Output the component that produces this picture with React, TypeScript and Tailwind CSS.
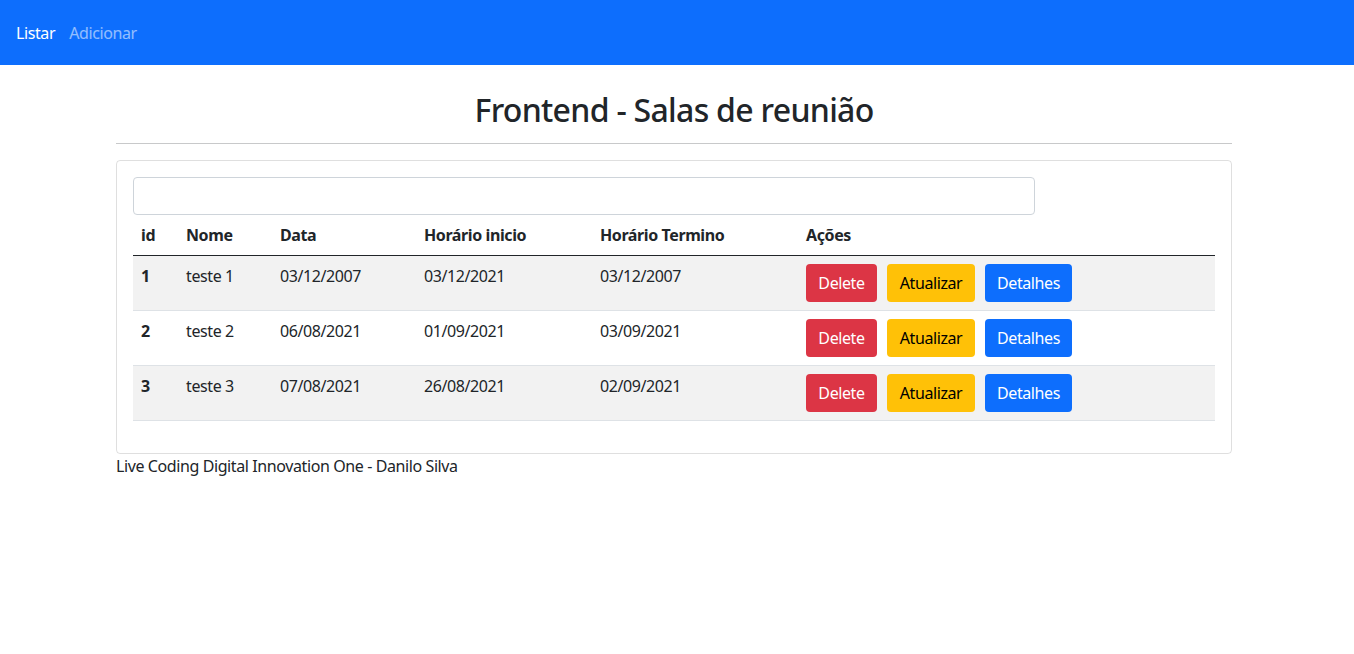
import React from "react";

const rows = [
  { id: 1, nome: "teste 1", data: "03/12/2007", inicio: "03/12/2021", termino: "03/12/2007" },
  { id: 2, nome: "teste 2", data: "06/08/2021", inicio: "01/09/2021", termino: "03/09/2021" },
  { id: 3, nome: "teste 3", data: "07/08/2021", inicio: "26/08/2021", termino: "02/09/2021" },
];

export default function App() {
  return (
    <div className="min-h-screen bg-white text-[#212529] text-[16px] leading-6 tracking-[-0.4px]" style={{ fontFamily: '"Noto Sans", sans-serif' }}>
      <nav className="bg-[#0d6efd] h-[65px] flex items-center px-4">
        <a className="text-white pr-[14px] cursor-pointer">Listar</a>
        <a className="text-white/55 cursor-pointer">Adicionar</a>
      </nav>
      <div className="w-[1122px] pr-[6px] mx-auto">
        <h2 className="text-[32px] font-medium leading-[38px] text-center pt-[26px] tracking-[-0.7px]">Frontend - Salas de reunião</h2>
        <hr className="mt-[14px] mb-4 border-0 border-t border-[#c8c9ca]" />
        <div className="border border-black/[0.125] rounded p-4">
          <input className="block w-[902px] h-[38px] border border-[#ced4da] rounded px-3 outline-none" />
          <table className="w-full border-collapse mb-4">
            <thead>
              <tr className="border-b border-[#212529] font-bold text-left">
                <th className="p-2 w-[45px]">id</th>
                <th className="p-2 w-[94px]">Nome</th>
                <th className="p-2 w-[144px]">Data</th>
                <th className="p-2 w-[176px]">Horário inicio</th>
                <th className="p-2 w-[206px]">Horário Termino</th>
                <th className="p-2">Ações</th>
              </tr>
            </thead>
            <tbody>
              {rows.map((r, i) => (
                <tr key={r.id} className={"border-b border-[#dee2e6] align-top " + (i % 2 === 0 ? "bg-[#f2f2f2]" : "bg-white")}>
                  <td className="p-2 font-bold">{r.id}</td>
                  <td className="p-2">{r.nome}</td>
                  <td className="p-2">{r.data}</td>
                  <td className="p-2">{r.inicio}</td>
                  <td className="p-2">{r.termino}</td>
                  <td className="p-2">
                    <div className="flex gap-[10px]">
                      <button className="h-[38px] w-[71px] rounded bg-[#dc3545] text-white">Delete</button>
                      <button className="h-[38px] w-[88px] rounded bg-[#ffc107] text-black">Atualizar</button>
                      <button className="h-[38px] w-[87px] rounded bg-[#0d6efd] text-white">Detalhes</button>
                    </div>
                  </td>
                </tr>
              ))}
            </tbody>
          </table>
        </div>
        <p>Live Coding Digital Innovation One - Danilo Silva</p>
      </div>
    </div>
  );
}
